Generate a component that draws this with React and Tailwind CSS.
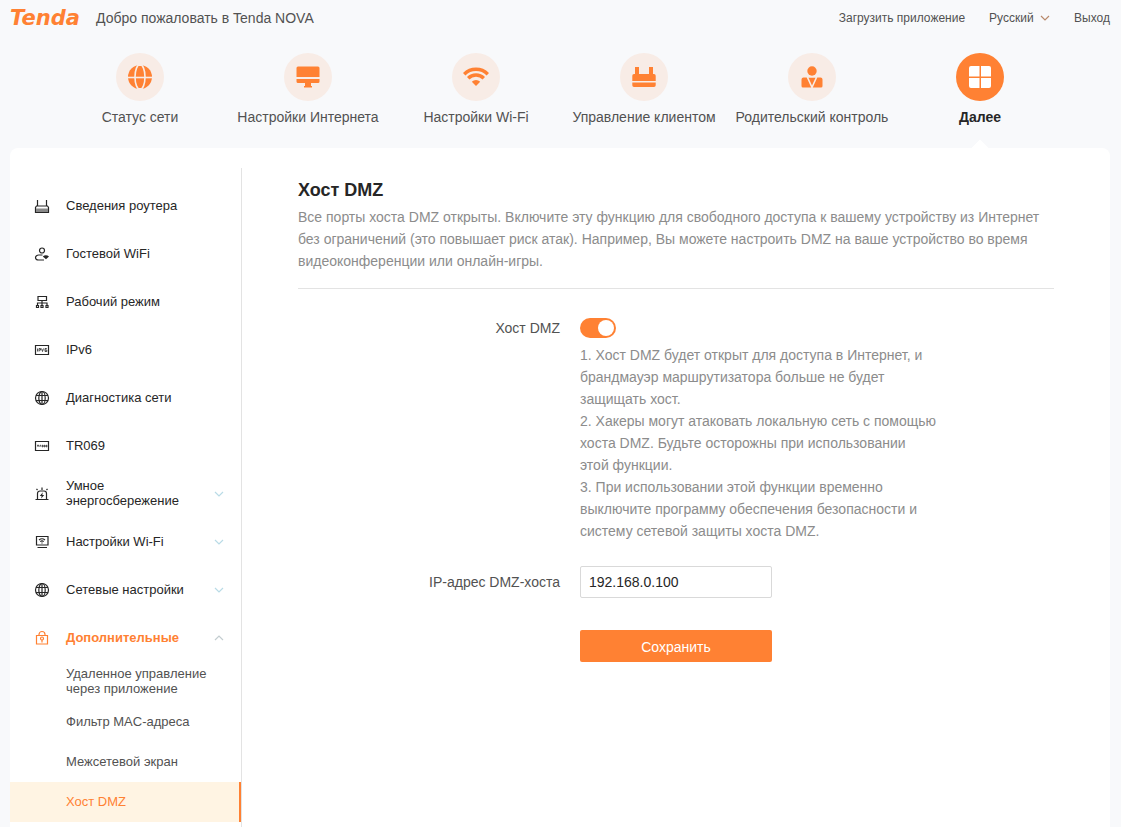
import React, { useState } from 'react';

const topNav = [
  { label: "Статус сети", icon: "globe" },
  { label: "Настройки Интернета", icon: "monitor" },
  { label: "Настройки Wi-Fi", icon: "wifi" },
  { label: "Управление клиентом", icon: "router" },
  { label: "Родительский контроль", icon: "parent" },
  { label: "Далее", icon: "more", active: true },
];

const sideMenu = [
  { label: "Сведения роутера", icon: "router" },
  { label: "Гостевой WiFi", icon: "guest" },
  { label: "Рабочий режим", icon: "mode" },
  { label: "IPv6", icon: "ipv6" },
  { label: "Диагностика сети", icon: "globe" },
  { label: "TR069", icon: "tr069" },
  { label: "Умное энергосбережение", icon: "power", group: true },
  { label: "Настройки Wi-Fi", icon: "wifi", group: true },
  { label: "Сетевые настройки", icon: "globe", group: true },
];

const subMenu = [
  { label: "Удаленное управление через приложение" },
  { label: "Фильтр MAC-адреса" },
  { label: "Межсетевой экран" },
  { label: "Хост DMZ", active: true },
];

const navIcons = {
  globe: (
    <>
      <circle cx="12" cy="12" r="12" fill="currentColor" />
      <g fill="none" stroke="#f8ece6" strokeWidth="1.6">
        <path d="M0 12.500h24" />
        <ellipse cx="12" cy="12" rx="5" ry="12.500" />
        <path d="M9.500 .3h5M9.500 23.700h5" />
      </g>
    </>
  ),
  monitor: (
    <g fill="currentColor">
      <path d="M2 1.500h20a1.500 1.500 0 0 1 1.500 1.500v9H.5V3A1.500 1.500 0 0 1 2 1.500z" />
      <path d="M.5 14h23v2.500a1.500 1.500 0 0 1-1.500 1.500h-7v3h1v1.500H8V21h1v-3H2A1.500 1.500 0 0 1 .5 16.500z" />
    </g>
  ),
  wifi: (
    <>
      <g fill="none" stroke="currentColor" strokeWidth="3.4">
        <path d="M.2 9.200a16.700 16.700 0 0 1 23.600 0" />
        <path d="M4.200 13.300a11 11 0 0 1 15.600 0" />
      </g>
      <path d="M7.800 16.800a6 6 0 0 1 8.400 0L12 21z" fill="currentColor" />
    </>
  ),
  router: (
    <g fill="currentColor">
      <path d="M3 2h4v7h10V2h4v7h1a1.700 1.700 0 0 1 1.700 1.700V16H.3v-5.300A1.700 1.700 0 0 1 2 9h1z" />
      <path d="M.3 17.500h23.400v2.800A1.700 1.700 0 0 1 22 22H2a1.700 1.700 0 0 1-1.700-1.700z" />
    </g>
  ),
  parent: (
    <g fill="currentColor">
      <circle cx="12" cy="6" r="4.700" />
      <path d="M3.500 12.500h3.200l4.500 10H3A1.500 1.500 0 0 1 1.500 21v-6.500a2 2 0 0 1 2-2zM20.500 12.500h-3.200l-4.500 10H21a1.500 1.500 0 0 0 1.500-1.500v-6.500a2 2 0 0 0-2-2zM8.500 12.700h7L12 20.500z" />
    </g>
  ),
  more: (
    <g fill="currentColor">
      <path d="M3 1h8.500v10.500H1V3a2 2 0 0 1 2-2zM13 1h8a2 2 0 0 1 2 2v8.500H13zM1 13h10.500v10H3a2 2 0 0 1-2-2zM13 13h10v8a2 2 0 0 1-2 2h-8z" />
    </g>
  ),
};

const sideIcons = {
  router: (
    <>
      <path d="M3.500 2v6M12.500 2v6M1.500 14.500V9.500l1-1.500h11l1 1.500v5z" />
      <path d="M2 10.500h12V14H2z" fill="#888" stroke="none" />
    </>
  ),
  guest: (
    <>
      <circle cx="8" cy="4.500" r="2.500" />
      <path d="M8.500 9H5a3.200 2.500 0 0 0-3.500 2.500C1.500 13.300 3 14 4.500 14H10" />
      <path d="M8.800 10.500c1.800-1.600 4.400-1.600 6.200 0L12 13.300z" fill="currentColor" stroke="none" />
    </>
  ),
  mode: (
    <path d="M4 2.500h8.500v4H4zM8 6.500v5M3.500 11.500v-2.500h9.500v2.500M2.500 11.500h2v2h-2zM7 11.500h2v2H7zM12 11.500h2v2h-2z" />
  ),
  ipv6: (
    <>
      <path d="M1.500 3.500h13v9h-13z" />
      <path d="M3.500 6.500v3M5 9.500v-3h1.500v1.600H5M7.500 6.500l1 3 1-3M12.800 6.500H11v3h1.800V8H11" strokeWidth="0.8" />
    </>
  ),
  tr069: (
    <>
      <path d="M1.500 3.500h13v9h-13z" />
      <path d="M3 7.300h2M4 7.300v1.700M6 9V7.300h1M8 7.300h1v1.500H8zM10 7.300h1v1.500h-1zM12 7.300h1v1.500h-1z" strokeWidth="0.8" />
    </>
  ),
  globe: (
    <>
      <circle cx="8" cy="8" r="6.500" />
      <ellipse cx="8" cy="8" rx="3.200" ry="6.500" />
      <path d="M2 5.500h12M2 10.500h12M8 1.500v13" />
    </>
  ),
  power: (
    <>
      <path d="M1.500 13.500h13M3.500 13.500V7.500A2.500 2.500 0 0 1 6 5h4a2.500 2.500 0 0 1 2.500 2.500v6M8 1.500v2.500M2.500 2.800l1 1.200M13.500 2.800l-1 1.200" />
      <path d="M8.800 6.200L5.800 10h1.800L7.200 12.500 10.200 9H8.300z" fill="currentColor" stroke="none" />
    </>
  ),
  wifi: (
    <>
      <path d="M2.500 2.500h11.500v8.500H2.500zM3.500 13.500h9.500" />
      <path d="M5 6c1.800-1.500 4.200-1.500 6 0M6.300 7.600c1-.8 2.400-.8 3.400 0M8 8.500v1" />
    </>
  ),
  lock: (
    <>
      <path d="M2.500 5.500h11v8.500h-11zM5 5.500V4.500a3 3 0 0 1 6 0v1" />
      <circle cx="8" cy="8.500" r="1.500" />
      <path d="M8 10v2.500" />
    </>
  ),
};

function SideIcon({ name }) {
  return (
    <svg className="size-4 shrink-0" viewBox="0 0 16 16" fill="none" stroke="currentColor" strokeWidth="1.2" aria-hidden="true">
      {sideIcons[name]}
    </svg>
  );
}

function Chevron({ up, className }) {
  return (
    <svg className={className} viewBox="0 0 10 6" fill="none" stroke="currentColor" strokeWidth="1.2" aria-hidden="true">
      <path d={up ? "M1 5l4-4 4 4" : "M1 1l4 4 4-4"} />
    </svg>
  );
}

function Header() {
  return (
    <header className="flex h-9 items-center justify-between text-[#525252]">
      <div className="flex items-center gap-4">
        <span className="font-['DejaVu_Sans',sans-serif] text-[21px] leading-8 font-bold italic text-[#ff8133]">Tenda</span>
        <span className="text-sm">Добро пожаловать в Tenda NOVA</span>
      </div>
      <div className="flex items-center gap-6 text-xs">
        <a href="#app">Загрузить приложение</a>
        <div className="flex items-center gap-1.5">
          <select aria-label="Язык" className="appearance-none bg-transparent outline-none">
            <option>Русский</option>
          </select>
          <Chevron className="h-1.5 w-2.5 text-[#b98a6c]" />
        </div>
        <a href="#logout">Выход</a>
      </div>
    </header>
  );
}

function TopNav() {
  return (
    <nav className="grid grid-cols-6 px-[46px] pt-[17px]">
      {topNav.map((item) => (
        <a
          key={item.label}
          href="#nav"
          className={`relative flex flex-col items-center gap-1.5 pb-[21px] text-sm whitespace-nowrap ${item.active ? "font-bold text-[#262626]" : "text-[#525252]"}`}
        >
          <span className={`flex size-12 items-center justify-center rounded-full ${item.active ? "bg-[#ff8133] text-white" : "bg-[#f8ece6] text-[#ff8133]"}`}>
            <svg className="size-6 overflow-visible" viewBox="0 0 24 24" aria-hidden="true">{navIcons[item.icon]}</svg>
          </span>
          {item.label}
          {item.active && <span className="absolute -bottom-1.5 size-3 rotate-45 bg-white"></span>}
        </a>
      ))}
    </nav>
  );
}

function Sidebar() {
  const [open, setOpen] = useState(true);

  return (
    <aside className="mt-5 w-[232px] shrink-0 border-r border-[#e3e3e3] pt-3.5 text-[13px] leading-[15px] text-[#262626]">
      {sideMenu.map((item) =>
        item.group ? (
          <button key={item.label} className="flex h-12 w-full items-center gap-4 pr-[17px] pl-6 text-left">
            <SideIcon name={item.icon} />
            <span className="w-32 pb-0.5">{item.label}</span>
            <Chevron className="ml-auto h-1.5 w-2.5 text-[#b9dbe6]" />
          </button>
        ) : (
          <a key={item.label} href="#menu" className="flex h-12 items-center gap-4 pr-[17px] pl-6">
            <SideIcon name={item.icon} />
            <span className="pb-0.5">{item.label}</span>
          </a>
        )
      )}
      <button
        className="flex h-12 w-full items-center gap-4 pr-[17px] pl-6 text-left font-bold text-[#ff8133]"
        onClick={() => setOpen(!open)}
        aria-expanded={open}
      >
        <SideIcon name="lock" />
        <span className="pb-0.5">Дополнительные</span>
        <Chevron up={open} className="ml-auto h-1.5 w-2.5 text-[#c3cdd0]" />
      </button>
      {open && subMenu.map((item) => (
        <a
          key={item.label}
          href="#sub"
          className={`flex h-10 items-center pr-6 pb-0.5 pl-14 ${item.active ? "border-r-2 border-[#ff8133] bg-[#fff4e3] text-[#ff8133]" : "text-[#525252]"}`}
        >
          {item.label}
        </a>
      ))}
    </aside>
  );
}

function DmzForm() {
  const [enabled, setEnabled] = useState(true);
  const [ip, setIp] = useState("192.168.0.100");

  return (
    <form className="grid grid-cols-[262px_1fr] gap-x-5 pt-[29px]" onSubmit={(e) => e.preventDefault()}>
      <label htmlFor="dmz" className="text-right leading-5">Хост DMZ</label>
      <div>
        <input
          id="dmz"
          type="checkbox"
          role="switch"
          checked={enabled}
          onChange={(e) => setEnabled(e.target.checked)}
          className="flex h-5 w-9 appearance-none items-center rounded-full bg-[#bfbfbf] px-0.5 before:size-4 before:rounded-full before:bg-white checked:justify-end checked:bg-[#ff8133]"
        />
        <div className="mt-1.5 w-[357px] leading-[22px] text-[#8c8c8c]">
          <p>1. Хост DMZ будет открыт для доступа в Интернет, и брандмауэр маршрутизатора больше не будет защищать хост.</p>
          <p>2. Хакеры могут атаковать локальную сеть с помощью хоста DMZ. Будьте осторожны при использовании этой функции.</p>
          <p>3. При использовании этой функции временно выключите программу обеспечения безопасности и систему сетевой защиты хоста DMZ.</p>
        </div>
      </div>

      <label htmlFor="ip" className="mt-6 text-right leading-8">IP-адрес DMZ-хоста</label>
      <input
        id="ip"
        type="text"
        value={ip}
        onChange={(e) => setIp(e.target.value)}
        className="mt-6 h-8 w-48 rounded-xs border border-[#d9d9d9] px-2 text-[#262626] outline-none"
      />

      <button type="submit" className="col-start-2 mt-8 h-8 w-48 rounded-xs bg-[#ff8133] pt-0.5 text-white">
        Сохранить
      </button>
    </form>
  );
}

function App() {
  return (
    <div className="flex min-h-screen flex-col bg-[#f8f9fb] pr-[11px] pl-2.5 font-['Liberation_Sans',Arial,sans-serif]">
      <Header />
      <TopNav />
      <div className="flex flex-1 rounded-t-lg bg-white">
        <Sidebar />
        <main className="min-w-0 flex-1 px-14 pt-[30px] text-sm text-[#525252]">
          <h1 className="text-lg leading-6 font-bold text-[#262626]">Хост DMZ</h1>
          <p className="mt-1 border-b border-[#e3e3e3] pb-4 leading-[22px] text-[#8c8c8c]">
            Все порты хоста DMZ открыты. Включите эту функцию для свободного доступа к вашему устройству из Интернет
            без ограничений (это повышает риск атак). Например, Вы можете настроить DMZ на ваше устройство во время
            видеоконференции или онлайн-игры.
          </p>
          <DmzForm />
        </main>
      </div>
    </div>
  );
}

export default App;
